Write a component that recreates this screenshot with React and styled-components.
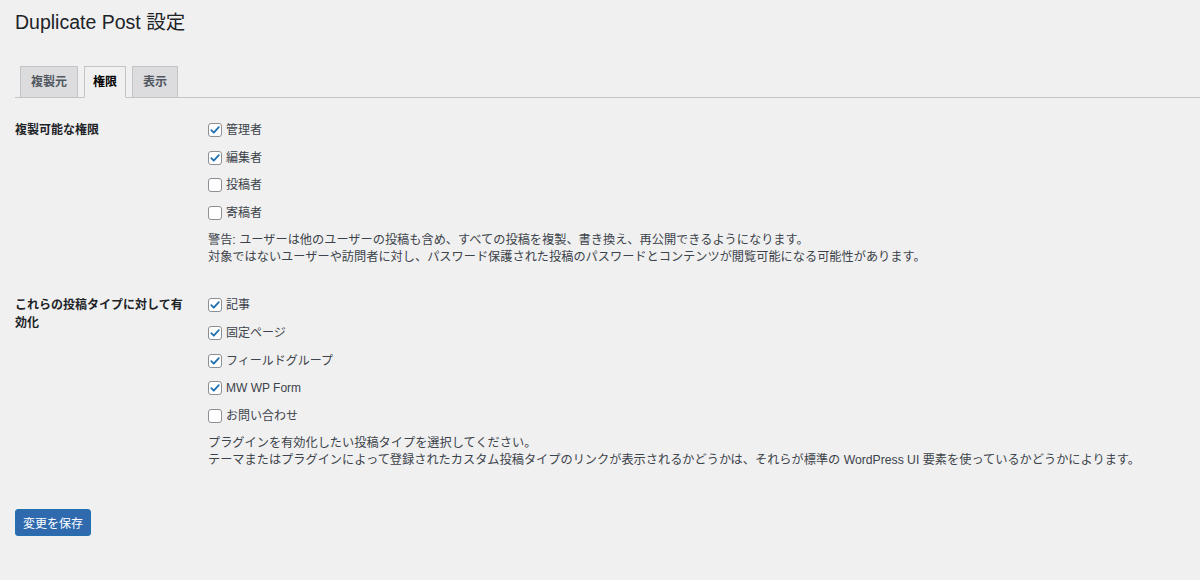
import React from "react";
import styled, { createGlobalStyle } from "styled-components";

const GlobalStyle = createGlobalStyle`
  html, body {
    margin: 0;
    padding: 0;
    background: #f0f0f1;
  }
  body {
    font-family: "Liberation Sans", "Noto Sans CJK JP", sans-serif;
    color: #3c434a;
    font-size: 12px;
  }
`;

const Wrap = styled.div`
  padding: 10px 0 40px 15px;
`;

const Title = styled.h1`
  margin: 0;
  font-size: 19.5px;
  font-weight: 400;
  line-height: 24px;
  color: #1d2327;
`;

const TabBar = styled.nav`
  display: flex;
  gap: 6px;
  margin-top: 32px;
  padding-left: 5px;
  border-bottom: 1px solid #c3c4c7;
`;

const Tab = styled.a`
  display: block;
  height: 30px;
  line-height: 30px;
  padding: 0 ${(p) => (p.$active ? 8 : 10)}px;
  margin-bottom: -1px;
  font-size: 12px;
  font-weight: 700;
  color: ${(p) => (p.$active ? "#000" : "#50575e")};
  background: ${(p) => (p.$active ? "#f0f0f1" : "#dcdcde")};
  border: 1px solid #c3c4c7;
  border-bottom-color: ${(p) => (p.$active ? "#f0f0f1" : "#c3c4c7")};
  text-decoration: none;
`;

const Section = styled.div`
  display: grid;
  grid-template-columns: 193px 1fr;
  margin-top: ${(p) => p.$top}px;
`;

const Label = styled.div`
  font-weight: 700;
  color: #1d2327;
  line-height: 18px;
  padding-right: 10px;
  width: 170px;
`;

const Options = styled.div`
  display: flex;
  flex-direction: column;
  gap: 9.7px;
`;

const Option = styled.label`
  display: flex;
  align-items: center;
  gap: 4px;
  height: 18px;
  line-height: 18px;
  color: #3c434a;
`;

const Box = styled.span`
  box-sizing: border-box;
  width: 14px;
  height: 14px;
  border: 1px solid #8c8f94;
  border-radius: 3px;
  background: #fff;
  display: inline-flex;
  align-items: center;
  justify-content: center;
`;

const Desc = styled.p`
  margin: 0;
  font-size: 12.2px;
  line-height: 17px;
  color: #3c434a;
`;

const SaveButton = styled.button`
  margin-top: 40px;
  height: 27px;
  padding: 0 7px;
  font-family: inherit;
  font-size: 12px;
  color: #fff;
  background: #2f6aaf;
  border: 1px solid #2271b1;
  border-radius: 3px;
  cursor: pointer;
`;

function Checkbox({ checked, children }) {
  return (
    <Option>
      <Box>
        {checked && (
          <svg width="12" height="12" viewBox="0 0 12 12">
            <path
              d="M2.3 6.2 L4.8 8.7 L9.8 3.2"
              fill="none"
              stroke="#2271b1"
              strokeWidth="1.8"
              strokeLinecap="round"
              strokeLinejoin="round"
            />
          </svg>
        )}
      </Box>
      {children}
    </Option>
  );
}

const roles = [
  ["管理者", true],
  ["編集者", true],
  ["投稿者", false],
  ["寄稿者", false],
];

const postTypes = [
  ["記事", true],
  ["固定ページ", true],
  ["フィールドグループ", true],
  ["MW WP Form", true],
  ["お問い合わせ", false],
];

export default function App() {
  return (
    <>
      <GlobalStyle />
      <Wrap>
        <Title>Duplicate Post 設定</Title>
        <TabBar>
          <Tab>複製元</Tab>
          <Tab $active>権限</Tab>
          <Tab>表示</Tab>
        </TabBar>

        <Section $top={23}>
          <Label>複製可能な権限</Label>
          <Options>
            {roles.map(([name, on]) => (
              <Checkbox key={name} checked={on}>
                {name}
              </Checkbox>
            ))}
            <div>
              <Desc>警告: ユーザーは他のユーザーの投稿も含め、すべての投稿を複製、書き換え、再公開できるようになります。</Desc>
              <Desc>対象ではないユーザーや訪問者に対し、パスワード保護された投稿のパスワードとコンテンツが閲覧可能になる可能性があります。</Desc>
            </div>
          </Options>
        </Section>

        <Section $top={30.5}>
          <Label>これらの投稿タイプに対して有効化</Label>
          <Options>
            {postTypes.map(([name, on]) => (
              <Checkbox key={name} checked={on}>
                {name}
              </Checkbox>
            ))}
            <div>
              <Desc>プラグインを有効化したい投稿タイプを選択してください。</Desc>
              <Desc>テーマまたはプラグインによって登録されたカスタム投稿タイプのリンクが表示されるかどうかは、それらが標準の WordPress UI 要素を使っているかどうかによります。</Desc>
            </div>
          </Options>
        </Section>

        <SaveButton>変更を保存</SaveButton>
      </Wrap>
    </>
  );
}
